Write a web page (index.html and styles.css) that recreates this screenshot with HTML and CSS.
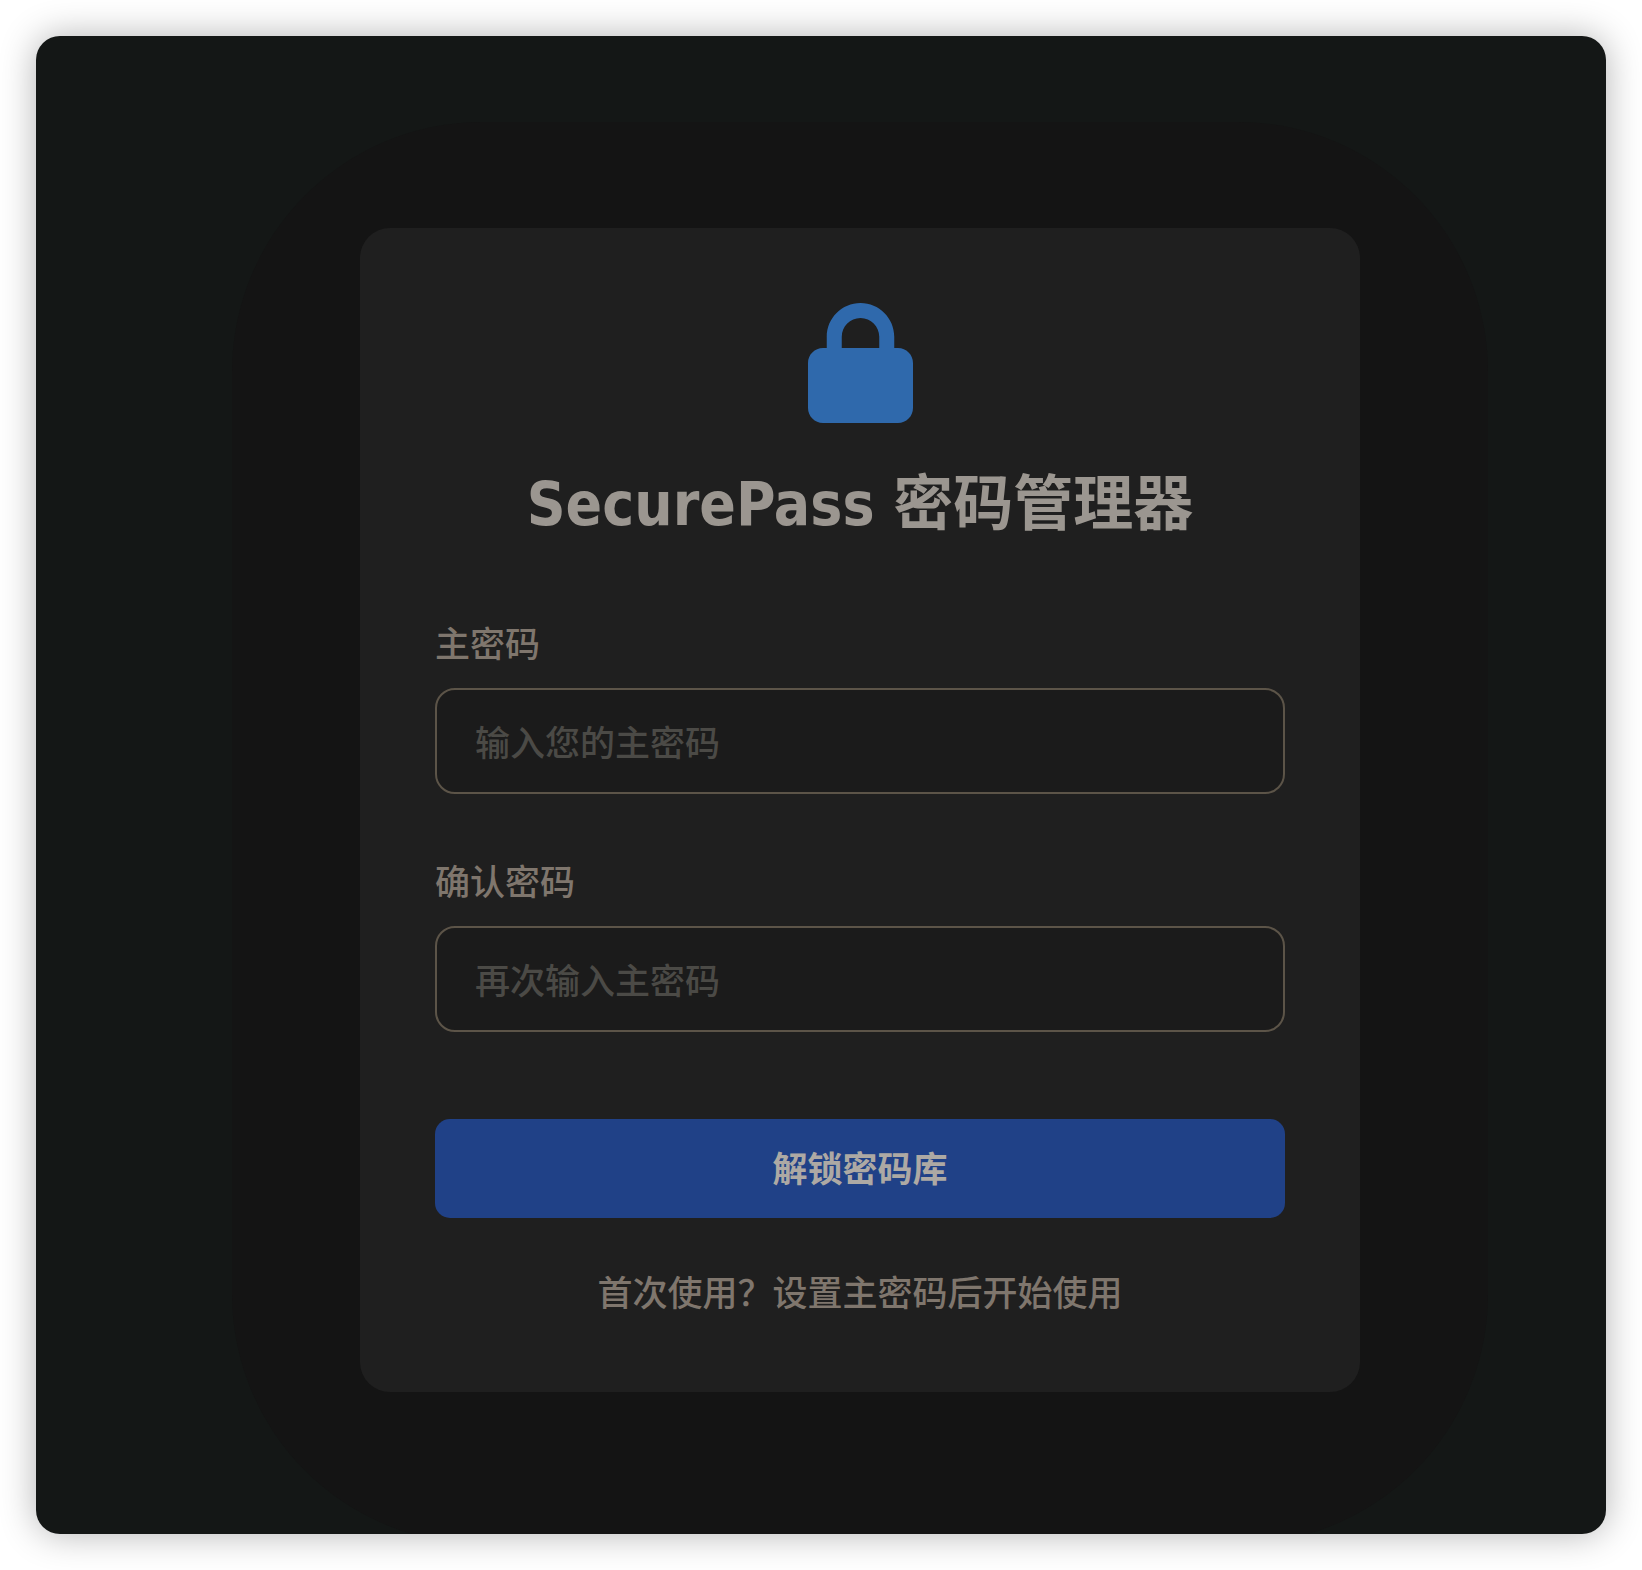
FILE: index.html
```html
<!DOCTYPE html>
<html lang="zh-CN">
<head>
<meta charset="utf-8">
<meta name="viewport" content="width=device-width, initial-scale=1">
<title>SecurePass 密码管理器</title>
<link rel="stylesheet" href="styles.css">
</head>
<body>
<main class="window">
  <form class="card">
    <svg class="lock" viewBox="0 0 448 512" aria-hidden="true"><path d="M144 144v48h160v-48c0-44.200-35.800-80-80-80s-80 35.800-80 80zM80 192v-48C80 64.500 144.500 0 224 0s144 64.500 144 144v48h16c35.300 0 64 28.700 64 64v192c0 35.300-28.700 64-64 64H64c-35.300 0-64-28.700-64-64V256c0-35.300 28.700-64 64-64h16z"/></svg>
    <h1 class="title">SecurePass 密码管理器</h1>
    <div class="field">
      <label class="label" for="master">主密码</label>
      <input class="input" id="master" type="password" placeholder="输入您的主密码">
    </div>
    <div class="field">
      <label class="label" for="confirm">确认密码</label>
      <input class="input" id="confirm" type="password" placeholder="再次输入主密码">
    </div>
    <button class="submit" type="button">解锁密码库</button>
    <p class="hint">首次使用？设置主密码后开始使用</p>
  </form>
</main>
</body>
</html>
```
FILE: styles.css
```css
* {
  box-sizing: border-box;
}

body {
  margin: 0;
  padding: 36px;
  background: #ffffff;
  font-family: "Noto Sans CJK SC", sans-serif;
}

.window {
  position: relative;
  z-index: 0;
  display: flex;
  justify-content: center;
  padding: 192px 0 142px 78px;
  border-radius: 24px;
  background: #141716;
  box-shadow: 0 0 36px rgba(0, 0, 0, 0.3);
  overflow: hidden;
}

.card {
  position: relative;
  display: flex;
  flex-direction: column;
  width: 100%;
  max-width: 1000px;
  padding: 75px;
  border-radius: 30px;
  background: #1f1f1f;
}

/* wide, faint shade behind the card */
.card::before {
  content: "";
  position: absolute;
  z-index: -1;
  inset: -106px -128px -152px;
  border-radius: 250px;
  background: #141414;
}

.lock {
  align-self: center;
  width: 105px;
  height: 120px;
  fill: #2f69ac;
}

.title {
  margin: 36px 0 7px;
  color: #9b9690;
  font-family: "DejaVu Sans Condensed", "Noto Sans CJK SC", sans-serif;
  font-size: 60px;
  font-weight: 700;
  line-height: 90px;
  text-align: center;
}

.field {
  display: flex;
  flex-direction: column;
  gap: 22px;
  padding-top: 62px;
}

.label,
.hint {
  color: #7f766d;
  font-size: 35px;
  font-weight: 500;
  line-height: 48px;
}

.input {
  width: 100%;
  height: 106px;
  padding: 0 38px 2px;
  border: 2px solid #5c5448;
  border-radius: 20px;
  outline: none;
  background: #1b1b1b;
  color: #9b9690;
  font-family: inherit;
  font-size: 35px;
  font-weight: 500;
}

.input::placeholder {
  color: #4b4a46;
  opacity: 1;
}

.submit {
  height: 99px;
  margin-top: 87px;
  padding: 0 0 4px;
  border: 0;
  border-radius: 15px;
  background: #204187;
  color: #ada9a4;
  font-family: inherit;
  font-size: 35px;
  font-weight: 700;
}

.hint {
  margin: 49px 0 2px;
  text-align: center;
}
```
